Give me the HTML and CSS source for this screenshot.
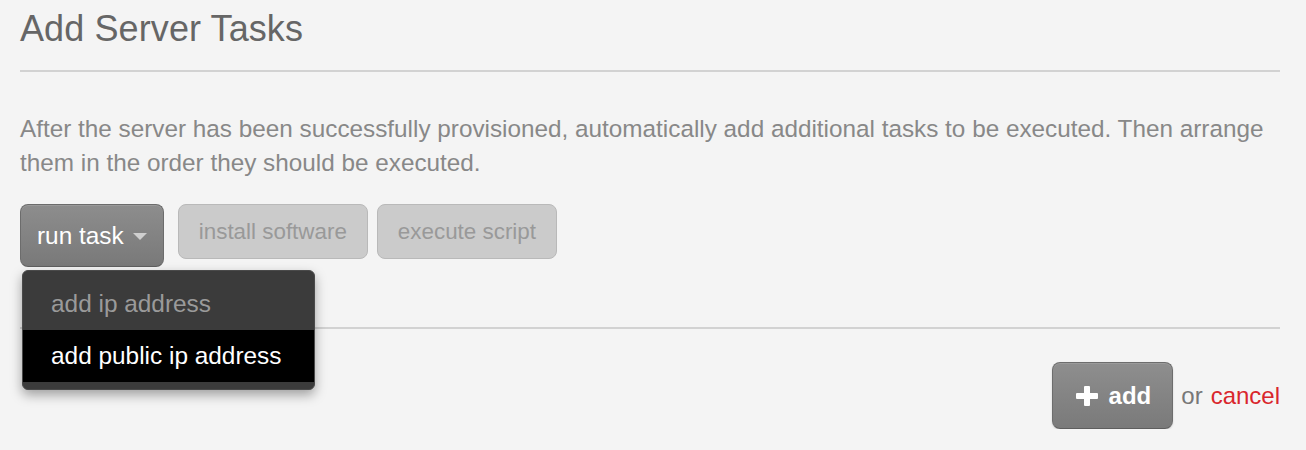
FILE: index.html
```html
<!DOCTYPE html>
<html lang="en">
<head>
<meta charset="utf-8">
<title>Add Server Tasks</title>
<link rel="stylesheet" href="styles.css">
</head>
<body>
<div class="page">
  <h1 class="title">Add Server Tasks</h1>
  <div class="rule"></div>
  <p class="intro">After the server has been successfully provisioned, automatically add additional tasks to be executed. Then arrange them in the order they should be executed.</p>
  <div class="actions">
    <div class="dropdown">
      <button class="btn btn-primary" type="button">run task<span class="caret"></span></button>
      <ul class="menu">
        <li class="menu-item">add ip address</li>
        <li class="menu-item menu-item-active">add public ip address</li>
      </ul>
    </div>
    <button class="btn btn-disabled" type="button">install software</button>
    <button class="btn btn-disabled" type="button">execute script</button>
  </div>
  <div class="rule rule-bottom"></div>
  <div class="footer">
    <button class="btn btn-add" type="button">
      <svg class="plus" width="22" height="20" viewBox="0 0 22 20" aria-hidden="true"><rect x="8" y="0" width="6" height="20" rx="1" fill="#fff"/><rect x="0" y="7" width="22" height="6" rx="1" fill="#fff"/></svg>
      <span>add</span>
    </button>
    <span class="or">or</span>
    <a class="cancel" href="#">cancel</a>
  </div>
</div>
</body>
</html>
```

FILE: styles.css
```css
html, body {
  margin: 0;
  padding: 0;
  background: #f4f4f4;
}

body {
  font-family: "Liberation Sans", Arial, Helvetica, sans-serif;
}

.page {
  padding: 8px 26px 0 20px;
}

.title {
  margin: 0;
  font-size: 36px;
  line-height: 42px;
  font-weight: normal;
  color: #666;
  letter-spacing: 0.1px;
}

.rule {
  height: 2px;
  background: #d2d2d2;
  margin-top: 20px;
}

.intro {
  margin: 40px 0 0;
  font-size: 24.3px;
  line-height: 34px;
  color: #888;
}

.actions {
  margin-top: 24px;
  display: flex;
  align-items: flex-start;
}

.dropdown {
  position: relative;
  margin-right: 14px;
}

.btn {
  font-family: "Liberation Sans", Arial, Helvetica, sans-serif;
  box-sizing: border-box;
  display: flex;
  align-items: center;
  border-radius: 8px;
  cursor: pointer;
  margin: 0;
}

.btn-primary {
  height: 63px;
  padding: 0 16px;
  font-size: 24.4px;
  color: #fff;
  background: linear-gradient(#8d8d8d, #797979);
  border: 1px solid #6c6c6c;
  border-bottom-color: #5f5f5f;
  box-shadow: inset 0 1px 0 rgba(255,255,255,0.12);
}

.caret {
  display: inline-block;
  width: 0;
  height: 0;
  margin-left: 9px;
  margin-top: 2px;
  border-left: 7.5px solid transparent;
  border-right: 7.5px solid transparent;
  border-top: 7px solid #cfcfcf;
}

.btn-disabled {
  height: 55px;
  padding: 0 20px;
  font-size: 22.4px;
  color: #999;
  background: #cbcbcb;
  border: 1px solid #b9b9b9;
  margin-right: 9px;
}

.menu {
  position: absolute;
  top: 66px;
  left: 2px;
  width: 293px;
  box-sizing: border-box;
  margin: 0;
  padding: 7px 0;
  list-style: none;
  background: #3b3b3b;
  border: 1px solid #4a4a4a;
  border-radius: 6px;
  box-shadow: 0 5px 12px rgba(0,0,0,0.35);
  z-index: 10;
}

.menu-item {
  height: 52px;
  line-height: 52px;
  padding-left: 28px;
  font-size: 24.4px;
  color: #9a9a9a;
}

.menu-item-active {
  background: #000;
  color: #fff;
}

.rule-bottom {
  margin-top: 60px;
}

.footer {
  margin-top: 33px;
  display: flex;
  justify-content: flex-end;
  align-items: center;
}

.btn-add {
  height: 67px;
  padding: 0 21px 0 23px;
  font-size: 24px;
  font-weight: bold;
  color: #fff;
  background: linear-gradient(#8e8e8e, #7a7a7a);
  border: 1px solid #6d6d6d;
  border-bottom-color: #5e5e5e;
  box-shadow: 0 1px 2px rgba(0,0,0,0.15), inset 0 1px 0 rgba(255,255,255,0.12);
}

.plus {
  margin-right: 11px;
  margin-top: 1px;
}

.or {
  margin-left: 8px;
  font-size: 24px;
  color: #777;
}

.cancel {
  margin-left: 8px;
  font-size: 24px;
  color: #d9262c;
  text-decoration: none;
}
```
